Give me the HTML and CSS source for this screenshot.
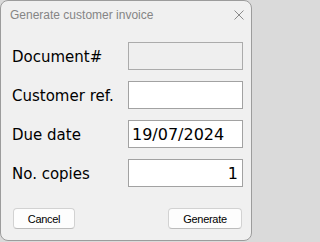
FILE: index.html
```html
<!DOCTYPE html>
<html>
<head>
<meta charset="utf-8">
<link rel="stylesheet" href="styles.css">
</head>
<body>
<div class="window">
  <div class="titlebar">
    <span class="title">Generate customer invoice</span>
    <svg class="close" width="10" height="10" viewBox="0 0 10 10"><path d="M0.5 0.5 L9.5 9.5 M9.5 0.5 L0.5 9.5" stroke="#8a8a8a" stroke-width="1" fill="none"/></svg>
  </div>
  <div class="form">
    <label class="label">Document#</label>
    <input class="field disabled" type="text" value="" disabled>
    <label class="label">Customer ref.</label>
    <input class="field" type="text" value="">
    <label class="label">Due date</label>
    <input class="field" type="text" value="19/07/2024">
    <label class="label">No. copies</label>
    <input class="field num" type="text" value="1">
  </div>
  <div class="buttons">
    <button class="btn cancel">Cancel</button>
    <button class="btn generate">Generate</button>
  </div>
</div>
</body>
</html>
```
FILE: styles.css
```css
html, body {
  margin: 0;
  padding: 0;
}
body {
  width: 254px;
  height: 242px;
  background: #dadada;
  overflow: hidden;
}
.window {
  box-sizing: border-box;
  width: 252px;
  height: 241px;
  border: 1px solid #9c9c9c;
  border-radius: 8px;
  background: #f0f0f0;
  display: flex;
  flex-direction: column;
}
.titlebar {
  height: 41px;
  display: flex;
  justify-content: space-between;
  align-items: flex-start;
  padding: 0 7px 0 9px;
  box-sizing: border-box;
}
.title {
  font-family: "Liberation Sans", Arial, sans-serif;
  font-size: 12px;
  line-height: 14px;
  color: #858585;
  padding-top: 7px;
}
.close {
  margin-top: 9px;
  display: block;
}
.form {
  display: grid;
  grid-template-columns: 116px 115px;
  grid-auto-rows: 28px;
  row-gap: 11px;
  padding: 0 0 0 11px;
  align-items: center;
}
.label {
  font-family: "DejaVu Sans", Verdana, sans-serif;
  font-size: 15px;
  line-height: 28px;
  padding-top: 1px;
  color: #000;
}
.field {
  box-sizing: border-box;
  width: 115px;
  height: 28px;
  margin: 0;
  border: 1px solid #a2a2a2;
  border-radius: 0;
  background: #fff;
  font-family: "DejaVu Sans", Verdana, sans-serif;
  font-size: 16px;
  color: #000;
  padding: 1px 4px 0 3px;
  outline: none;
}
.field.disabled {
  background: #efefef;
  border-color: #ababab;
}
.field.num {
  text-align: right;
}
.buttons {
  display: flex;
  justify-content: space-between;
  padding: 21px 9px 0 12px;
}
.btn {
  box-sizing: border-box;
  height: 21px;
  margin: 0;
  padding: 0;
  border: 1px solid #d2d2d2;
  border-bottom-color: #bcbcbc;
  border-radius: 4px;
  background: #fdfdfd;
  font-family: "Liberation Sans", Arial, sans-serif;
  font-size: 11px;
  letter-spacing: -0.3px;
  color: #000;
}
.cancel {
  width: 62px;
}
.generate {
  width: 74px;
}
```
